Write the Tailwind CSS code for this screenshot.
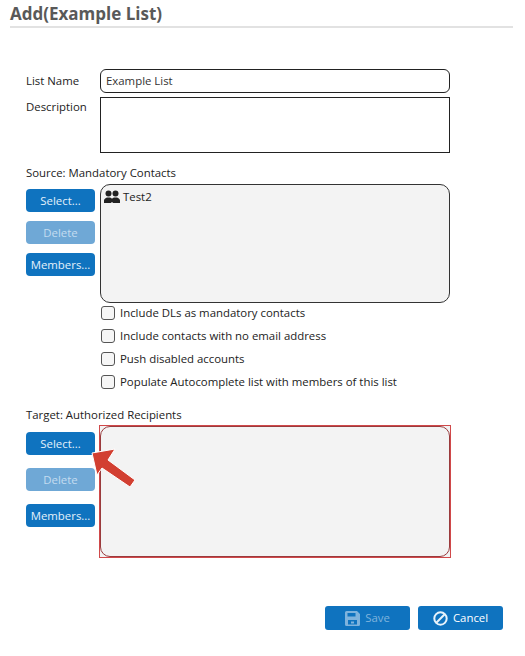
<!DOCTYPE html>
<html lang="en">
  <head>
    <meta charset="UTF-8" />
    <title>Add List</title>
    <script src="https://cdn.jsdelivr.net/npm/@tailwindcss/browser@4"></script>
  </head>
  <body class="bg-white font-['Open_Sans',sans-serif] text-[11.4px] text-[#222]">
    <div class="relative w-[525px] h-[656px] overflow-hidden">
      <!-- Title -->
      <div class="mx-[10px] h-[29px] w-[503px] border-b-2 border-[#e2e2e2]">
        <h1 class="text-[17px] leading-[29px] font-bold text-[#595959] -mt-px">Add(Example List)</h1>
      </div>

      <div class="pl-[26px] pt-[41px] w-[451px]">
        <!-- List name -->
        <div class="flex h-[24px]">
          <label class="w-[74px] leading-[23px]">List Name</label>
          <div class="w-[350px] border border-[#222] rounded-[6px] pl-[5px] leading-[22px] text-[#333]">Example List</div>
        </div>
        <div class="flex h-[56px] mt-[4px]">
          <label class="w-[74px] leading-[20px]">Description</label>
          <div class="w-[350px] border border-[#222]"></div>
        </div>

        <!-- Source -->
        <p class="mt-[12px] leading-[16px]">Source: Mandatory Contacts</p>
        <div class="flex mt-[3px]">
          <div class="w-[74px] pt-[5px] flex flex-col gap-[9px]">
            <button class="w-[69px] h-[23px] rounded-[4px] bg-[#0f73bf] text-[#e3f1fb]">Select...</button>
            <button class="w-[69px] h-[23px] rounded-[4px] bg-[#6fa8d6] text-[#c4dcf0]">Delete</button>
            <button class="w-[69px] h-[23px] rounded-[4px] bg-[#0f73bf] text-[#e3f1fb]">Members...</button>
          </div>
          <div class="w-[350px] h-[119px] border border-[#333] rounded-[10px] bg-[#f3f3f3] pl-[3px] pt-[3px] flex items-start gap-[3px]">
            <svg class="w-[16px] h-[14px] mt-[2px]" viewBox="0 0 16 14" fill="#222">
              <circle cx="4.500" cy="3.500" r="3" />
              <circle cx="11.500" cy="3.500" r="3" />
              <path d="M0 13v-2.500c0-1.500 1.500-2.500 3-3h3c.8.300 1.500.7 2 1.200.5-.5 1.200-.9 2-1.200h3c1.500.5 3 1.500 3 3V13H8.800v-.8h-1.600v.8z" />
            </svg>
            <span class="leading-[18px]">Test2</span>
          </div>
        </div>

        <!-- Options -->
        <div class="ml-[75px] mt-[2px] flex flex-col gap-[8px]">
          <label class="flex items-center gap-[5px] h-[15px]"><span class="w-[14px] h-[14px] border border-[#555] rounded-[3px] bg-[#f6f6f6]"></span>Include DLs as mandatory contacts</label>
          <label class="flex items-center gap-[5px] h-[15px]"><span class="w-[14px] h-[14px] border border-[#555] rounded-[3px] bg-[#f6f6f6]"></span>Include contacts with no email address</label>
          <label class="flex items-center gap-[5px] h-[15px]"><span class="w-[14px] h-[14px] border border-[#555] rounded-[3px] bg-[#f6f6f6]"></span>Push disabled accounts</label>
          <label class="flex items-center gap-[5px] h-[15px]"><span class="w-[14px] h-[14px] border border-[#555] rounded-[3px] bg-[#f6f6f6]"></span>Populate Autocomplete list with members of this list</label>
        </div>

        <!-- Target -->
        <p class="mt-[18px] leading-[16px]">Target: Authorized Recipients</p>
        <div class="flex mt-[2px]">
          <div class="w-[73px] pt-[7px] flex flex-col gap-[13px]">
            <button class="w-[69px] h-[23px] rounded-[4px] bg-[#0f73bf] text-[#e3f1fb]">Select...</button>
            <button class="w-[69px] h-[23px] rounded-[4px] bg-[#6fa8d6] text-[#c4dcf0]">Delete</button>
            <button class="w-[69px] h-[23px] rounded-[4px] bg-[#0f73bf] text-[#e3f1fb]">Members...</button>
          </div>
          <div class="w-[352px] h-[133px] border border-[#d0494a] bg-[#f3f3f3]">
            <div class="w-full h-full border border-[#9a3a3c] rounded-[10px] bg-[#f3f3f3]"></div>
          </div>
        </div>
      </div>

      <!-- Arrow annotation -->
      <svg class="absolute left-[90px] top-[446px] w-[48px] h-[44px]" viewBox="0 0 48 44">
        <path d="M2 7 L25 3 L18 14 L45 34 L40 41 L12 22 L7 29 Z" fill="#d23f31" stroke="#fff" stroke-width="1" />
      </svg>

      <!-- Footer -->
      <div class="flex gap-[8px] ml-[325px] mt-[48px]">
        <button class="w-[85px] h-[24px] rounded-[3px] bg-[#0f73bf] text-[#7fb3dd] flex items-center justify-center gap-[5px]">
          <svg class="w-[15px] h-[15px]" viewBox="0 0 15 15" fill="#7fb3dd">
            <path d="M0 1.500A1.500 1.500 0 0 1 1.500 0H12l3 3v10.500a1.500 1.500 0 0 1-1.500 1.500h-12A1.500 1.500 0 0 1 0 13.500zM2.500 2v3.500h8V2zM3 9v4.500h9V9zM6 10.500h3v2H6z" fill-rule="evenodd" />
          </svg>
          Save
        </button>
        <button class="w-[85px] h-[24px] rounded-[3px] bg-[#0f73bf] text-white flex items-center justify-center gap-[5px]">
          <svg class="w-[15px] h-[15px]" viewBox="0 0 15 15" fill="none" stroke="#e8f3fb" stroke-width="2">
            <circle cx="7.500" cy="7.500" r="6.200" />
            <path d="M3.300 11.700 11.700 3.300" />
          </svg>
          Cancel
        </button>
      </div>
    </div>
  </body>
</html>
